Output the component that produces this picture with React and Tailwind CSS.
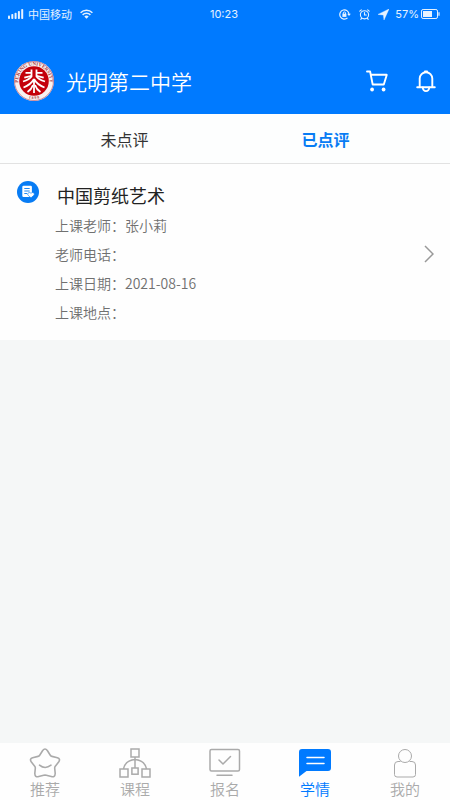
import React, { useState } from 'react';

function SignalIcon() {
  return (
    <svg width="16" height="10" viewBox="0 0 16 10" fill="currentColor" aria-hidden="true">
      <rect x="0" y="6.5" width="2" height="3.5" rx="0.8" />
      <rect x="3.3" y="5" width="2" height="5" rx="0.8" />
      <rect x="6.6" y="3.8" width="2" height="6.2" rx="0.8" />
      <rect x="9.9" y="2" width="2" height="8" rx="0.8" />
      <rect x="13.2" y="0" width="2" height="10" rx="0.8" />
    </svg>
  );
}

function WifiIcon() {
  return (
    <svg width="13" height="10" viewBox="0 0 13 10" fill="none" stroke="currentColor" strokeWidth="1.5" aria-hidden="true">
      <path d="M0.6 3.7a8.4 8.4 0 0 1 11.8 0" />
      <path d="M2.6 5.9a5.5 5.5 0 0 1 7.8 0" />
      <path d="M6.5 9.8L4.3 7.6a3.1 3.1 0 0 1 4.4 0z" fill="currentColor" stroke="none" />
    </svg>
  );
}

function RotationLockIcon() {
  return (
    <svg width="12" height="11" viewBox="0 0 12 11" fill="none" stroke="currentColor" strokeWidth="1.2" aria-hidden="true">
      <path d="M10 5.5a4.6 4.6 0 1 0-1.5 3.4" />
      <path d="M8.2 4.8l1.8 2.3L11.8 4.8z" fill="currentColor" stroke="none" />
      <rect x="3.4" y="4.7" width="4" height="3.2" fill="currentColor" stroke="none" />
      <path d="M4.3 5V4a1.1 1.1 0 0 1 2.2 0v1" strokeWidth="0.9" />
    </svg>
  );
}

function AlarmIcon() {
  return (
    <svg width="11" height="11" viewBox="0 0 11 11" fill="none" stroke="currentColor" strokeWidth="1.1" strokeLinecap="round" aria-hidden="true">
      <circle cx="5.5" cy="5.8" r="4.1" />
      <path d="M5.5 3.5V6h1.8M0.8 2.2L2.3 0.9M10.2 2.2L8.7 0.9M2.7 9.2l-.9 1.1M8.3 9.2l.9 1.1" />
    </svg>
  );
}

function LocationIcon() {
  return (
    <svg width="11" height="11" viewBox="0 0 11 11" fill="currentColor" aria-hidden="true">
      <path d="M11 0L0 5.4l5.4.6L6 11z" stroke="currentColor" strokeWidth="0.4" />
    </svg>
  );
}

function BatteryIcon() {
  return (
    <svg width="19" height="10" viewBox="0 0 19 10" fill="none" stroke="currentColor" aria-hidden="true">
      <rect x="0.5" y="0.5" width="16" height="9" rx="1.6" />
      <rect x="2" y="2" width="9" height="6" fill="currentColor" stroke="none" />
      <path d="M18 3.2v3.6" strokeWidth="1.2" />
    </svg>
  );
}

function SchoolBadge() {
  return (
    <svg width="40" height="42" viewBox="0 0 40 42" className="overflow-visible" role="img" aria-label="校徽">
      <defs>
        <path id="badge-top" d="M6.8 29.5A15.7 15.7 0 1 1 33.2 29.5" />
        <path id="badge-bottom" d="M9.5 35.7A18.1 18.1 0 0 0 30.5 35.7" />
      </defs>
      <circle cx="20" cy="21" r="20" fill="#f8f1f1" />
      <circle cx="20" cy="21" r="19.5" fill="none" stroke="#b9485b" strokeWidth="0.6" />
      <circle cx="20" cy="21" r="14.8" fill="#c4000b" />
      <text className="font-['Liberation_Serif',serif] font-bold" fontSize="5" fill="#a93a42">
        <textPath href="#badge-top" startOffset="50%" textAnchor="middle">PEKING UNIVERSITY</textPath>
      </text>
      <text className="font-['Liberation_Serif',serif] font-bold" fontSize="4" fill="#a93a42">
        <textPath href="#badge-bottom" startOffset="50%" textAnchor="middle">1 8 9 8</textPath>
      </text>
      <g fill="none" stroke="#fff" strokeWidth="1.8">
        <path d="M17.5 9.5v7q-2 3-8.5 5M22.5 9.5v7q2 3 8.5 5" />
        <path d="M11.5 12.8h6M10.3 17.6l7.2-1.8M28.500 12.800h-6M29.700 17.600l-7.200-1.800" />
        <path d="M20 20v13M20 19q-3 5.500-10.500 8.500M20 19q3 5.500 10.500 8.500" />
        <path d="M19 25q-1.500 4.500-5.500 7M21 25q1.500 4.500 5.500 7" />
      </g>
    </svg>
  );
}

function CartIcon() {
  return (
    <svg width="22" height="22" viewBox="0 0 22 22" fill="none" stroke="currentColor" strokeWidth="1.9" strokeLinecap="round" strokeLinejoin="round" aria-hidden="true">
      <path d="M1 1.5h3.1l2.6 13h11.1l3-9.7H5" />
      <circle cx="6.1" cy="19.5" r="1.9" fill="currentColor" stroke="none" />
      <circle cx="17.6" cy="19.5" r="1.9" fill="currentColor" stroke="none" />
    </svg>
  );
}

function BellIcon() {
  return (
    <svg width="20" height="23" viewBox="0 0 20 23" fill="none" stroke="currentColor" strokeWidth="1.9" strokeLinecap="round" strokeLinejoin="round" aria-hidden="true">
      <path d="M3.7 17V8.5a6.3 6.3 0 0 1 12.6 0V17M1.2 17.2h17.6M8.9 1.5h2.2" />
      <path d="M6.8 17.5a3.2 3.6 0 0 0 6.4 0" />
    </svg>
  );
}

function CourseIcon() {
  return (
    <svg width="22" height="22" viewBox="0 0 22 22" className="text-[#087cf4]" aria-hidden="true">
      <circle cx="11" cy="11" r="11" fill="currentColor" />
      <path d="M6.5 4.8h7.2A1.2 1.2 0 0 1 14.9 6V16H6.5a1.2 1.2 0 0 1-1.2-1.2V6a1.2 1.2 0 0 1 1.2-1.2z" fill="#fff" />
      <path d="M7.3 7.5h5.4M7.3 10h5.4M7.3 12.5h2.7" stroke="currentColor" strokeWidth="0.9" />
      <path d="M14 16.800l-3.100-2.700a1.700 1.700 0 0 1 2.400-2.300l.7.6.7-.6a1.700 1.700 0 0 1 2.400 2.300z" fill="#fff" stroke="currentColor" strokeWidth="0.6" />
    </svg>
  );
}

function ChevronIcon() {
  return (
    <svg width="10" height="18" viewBox="0 0 10 18" fill="none" stroke="currentColor" strokeWidth="1.5" aria-hidden="true">
      <path d="M1 1l8 8-8 8" />
    </svg>
  );
}

function StarIcon() {
  return (
    <svg width="32" height="30" viewBox="0 0 32 30" fill="none" stroke="currentColor" strokeWidth="1.6" strokeLinecap="round" strokeLinejoin="round" aria-hidden="true">
      <path d="M13.7 2.5q2.3-3 4.6 0l3 4.7q.6.9 1.7 1.2l5.4 1.300q3.300 1.100 1.400 4.100l-3.500 4.500q-.7.900-.6 2l.5 5.200q-.2 4.100-3.900 3.100l-5-1.300q-1.300-.3-2.600 0l-5 1.300q-3.700 1-3.900-3.100l.5-5.200q.1-1.100-.6-2l-3.500-4.500q-1.900-3 1.400-4.100L9 8.400q1.100-.3 1.700-1.200z" />
      <path d="M10.5 17.2q5.600 4.600 11.500 0" />
    </svg>
  );
}

function TreeIcon() {
  return (
    <svg width="32" height="30" viewBox="0 0 32 30" fill="none" stroke="currentColor" strokeWidth="1.5" aria-hidden="true">
      <rect x="12" y="1" width="8" height="8" />
      <rect x="1" y="21" width="8" height="8" />
      <rect x="12.9" y="20" width="6.2" height="6.2" />
      <rect x="23" y="21" width="8" height="8" />
      <path d="M16 9v11M4.500 21q1.500-8.500 11.500-9.500 10 1 11.500 9.500" />
    </svg>
  );
}

function MonitorIcon() {
  return (
    <svg width="32" height="30" viewBox="0 0 32 30" fill="none" stroke="currentColor" strokeWidth="1.5" strokeLinecap="round" aria-hidden="true">
      <rect x="1" y="1.5" width="29.5" height="21.5" rx="1.5" />
      <path d="M10 12l4 4 7.5-7.500M8 27.300h15" />
    </svg>
  );
}

function ChatIcon() {
  return (
    <svg width="32" height="30" viewBox="0 0 32 30" aria-hidden="true">
      <path d="M3 1h26a3 3 0 0 1 3 3v16a3 3 0 0 1-3 3H7.500L0 28.800V4a3 3 0 0 1 3-3z" fill="currentColor" />
      <path d="M8 9.500h17M8 15.500h17" stroke="#fff" strokeWidth="1.500" strokeLinecap="round" />
    </svg>
  );
}

function PersonIcon() {
  return (
    <svg width="32" height="30" viewBox="0 0 32 30" fill="none" stroke="currentColor" strokeWidth="1" aria-hidden="true">
      <circle cx="16" cy="8" r="6.5" />
      <path d="M11.500 13.500H9A3.500 3.500 0 0 0 5.500 17v9.500A2.500 2.500 0 0 0 8 29h16a2.500 2.500 0 0 0 2.500-2.500V17a3.500 3.500 0 0 0-3.500-3.500h-2.500" />
    </svg>
  );
}

const tabs = ['未点评', '已点评'];

const details = [
  ['上课老师\uff1a', '张小莉'],
  ['老师电话\uff1a', ''],
  ['上课日期\uff1a', '2021-08-16'],
  ['上课地点\uff1a', ''],
];

const navItems = [
  ['推荐', StarIcon],
  ['课程', TreeIcon],
  ['报名', MonitorIcon],
  ['学情', ChatIcon],
  ['我的', PersonIcon],
];

export default function App() {
  const [tab, setTab] = useState('已点评');
  const [page, setPage] = useState('学情');

  return (
    <div lang="zh-CN" className="flex min-h-screen flex-col bg-[#f5f7f7] font-['Noto_Sans_CJK_SC',sans-serif]">
      <header className="bg-[#007aff] text-white">
        <div className="grid h-7 grid-cols-3 items-center pr-2.5 pl-2 text-[11px] leading-4 text-white/90">
          <div className="flex items-center">
            <SignalIcon />
            <span className="mr-2 ml-1">中国移动</span>
            <WifiIcon />
          </div>
          <time className="text-center font-[Inter,sans-serif]">10:23</time>
          <div className="flex items-center justify-end">
            <div className="mr-1.5 flex items-center gap-2">
              <RotationLockIcon />
              <AlarmIcon />
              <LocationIcon />
            </div>
            <span className="mr-0.5 font-[Inter,sans-serif]">57%</span>
            <BatteryIcon />
          </div>
        </div>
        <div className="flex items-center px-3.5 pt-8 pb-3">
          <SchoolBadge />
          <h1 className="ml-3 flex-1 text-[21px] leading-8 font-[350]">光明第二中学</h1>
          <div className="flex items-center gap-7">
            <button type="button" aria-label="购物车"><CartIcon /></button>
            <button type="button" aria-label="通知"><BellIcon /></button>
          </div>
        </div>
      </header>

      <div className="grid h-[50px] grid-cols-2 border-b border-[#e2e2e2] bg-[#fdfefe] px-6" role="tablist">
        {tabs.map((name) => (
          <button
            key={name}
            type="button"
            role="tab"
            aria-selected={tab === name}
            onClick={() => setTab(name)}
            className={tab === name ? 'text-base font-bold text-[#087cf4]' : 'text-base text-[#333]'}
          >
            {name}
          </button>
        ))}
      </div>

      <main className="flex-1">
        <a href="#course" className="flex items-center bg-[#fefefe] pt-4 pr-4 pb-[13px] pl-[17px]">
          <div className="self-start pt-px"><CourseIcon /></div>
          <div className="ml-4 flex-1">
            <h2 className="pl-0.5 text-lg leading-[31px] text-[#222]">中国剪纸艺术</h2>
            <dl className="text-sm leading-[29px] font-[350] text-[#707070]">
              {details.map(([label, value]) => (
                <div key={label} className="flex">
                  <dt>{label}</dt>
                  <dd>{value}</dd>
                </div>
              ))}
            </dl>
          </div>
          <div className="text-[#999]"><ChevronIcon /></div>
        </a>
      </main>

      <nav className="grid grid-cols-5 bg-[#fefefe] pt-[5px] pb-px">
        {navItems.map(([name, Icon]) => (
          <button
            key={name}
            type="button"
            aria-current={page === name ? 'page' : undefined}
            onClick={() => setPage(name)}
            className={page === name ? 'flex flex-col items-center text-[#007aff]' : 'flex flex-col items-center text-[#aaa]'}
          >
            <Icon />
            <span className="text-[15px] leading-[21px] font-[350]">{name}</span>
          </button>
        ))}
      </nav>
    </div>
  );
}
